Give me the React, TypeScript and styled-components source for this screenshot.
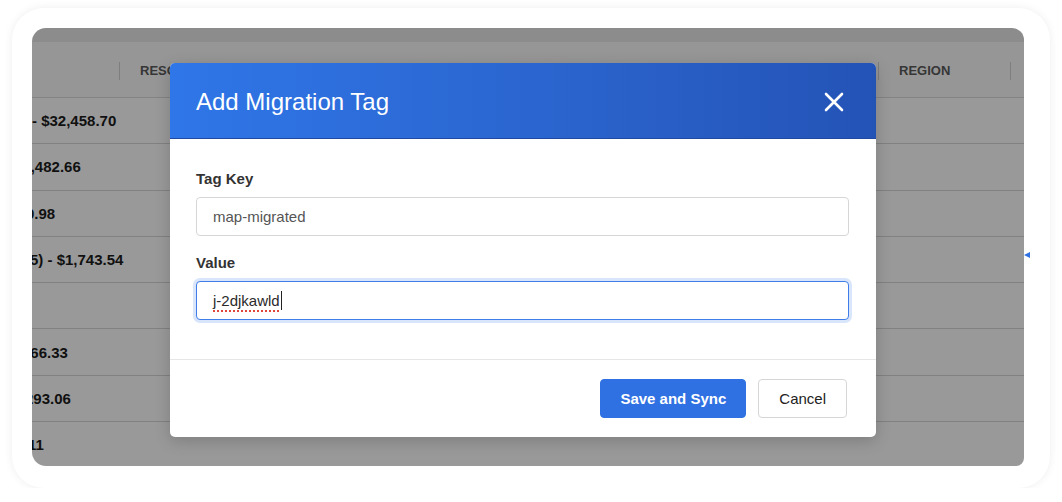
import React from "react";
import styled, { createGlobalStyle } from "styled-components";

const GlobalStyle = createGlobalStyle`
  body {
    margin: 0;
    background: #ffffff;
    font-family: "Liberation Sans", Arial, sans-serif;
  }
`;

const rows = [
  { text: "- $32,458.70", shift: 0 },
  { text: "$1,482.66", shift: -18 },
  { text: "0.98", shift: -6 },
  { text: "(5) - $1,743.54", shift: -7 },
  { text: "", shift: 0 },
  { text: "$66.33", shift: -10 },
  { text: "293.06", shift: -7 },
  { text: "11", shift: -4 },
];

function CloseIcon() {
  return (
    <svg width="20" height="20" viewBox="0 0 20 20" fill="none">
      <path d="M2 2L18 18M18 2L2 18" stroke="#fff" strokeWidth="2.6" strokeLinecap="round" />
    </svg>
  );
}

export default function App() {
  return (
    <>
      <GlobalStyle />
      <Page>
        <Card>
          <Screen>
            <TopBand />
            <HeaderRow>
              <HeaderCell />
              <HeaderCell $divider>RESOURCE</HeaderCell>
              <HeaderCell $divider>REGION</HeaderCell>
              <HeaderCell $divider />
            </HeaderRow>
            {rows.map((r, i) => (
              <Row key={i}>
                <AmountCell $shift={r.shift}>{r.text}</AmountCell>
                <Cell />
                <Cell />
                <Cell />
              </Row>
            ))}
            <Overlay />
            <Modal>
              <ModalHeader>
                <ModalTitle>Add Migration Tag</ModalTitle>
                <CloseButton aria-label="Close">
                  <CloseIcon />
                </CloseButton>
              </ModalHeader>
              <ModalBody>
                <Field>
                  <Label>Tag Key</Label>
                  <InputBox>
                    <InputText>map-migrated</InputText>
                  </InputBox>
                </Field>
                <Field>
                  <Label>Value</Label>
                  <InputBox $focused>
                    <InputText $misspelled>j-2djkawld</InputText>
                    <Caret />
                  </InputBox>
                </Field>
              </ModalBody>
              <ModalFooter>
                <Button $primary>Save and Sync</Button>
                <Button>Cancel</Button>
              </ModalFooter>
            </Modal>
          </Screen>
          <EdgeArrow />
        </Card>
      </Page>
    </>
  );
}

const Page = styled.div`
  padding: 8px 0 0 12px;
`;

const Card = styled.div`
  position: relative;
  box-sizing: border-box;
  width: 1038px;
  height: 480px;
  padding: 20px 26px 22px 20px;
  background: #ffffff;
  border-radius: 32px;
  box-shadow: 0 0 10px rgba(0, 0, 0, 0.07);
`;

const Screen = styled.div`
  position: relative;
  width: 100%;
  height: 100%;
  overflow: hidden;
  background: #ffffff;
  border-radius: 14px 12px 8px 14px;
`;

const TopBand = styled.div`
  height: 14px;
  background: #e9e9e9;
`;

const columns = "87px 759px 132px 1fr";

const HeaderRow = styled.div`
  display: grid;
  grid-template-columns: ${columns};
  align-items: center;
  height: 56px;
  box-sizing: border-box;
  border-bottom: 1px solid #dadada;
  background: #fafafa;
`;

const HeaderCell = styled.div<{ $divider?: boolean }>`
  height: 18px;
  line-height: 18px;
  margin-top: 2px;
  padding-left: 20px;
  border-left: ${(p) => (p.$divider ? "1px solid #d2d2d2" : "none")};
  font-size: 13px;
  font-weight: 700;
  color: #5a5a5a;
  white-space: nowrap;
  overflow: hidden;
`;

const Row = styled.div`
  display: grid;
  grid-template-columns: ${columns};
  align-items: center;
  height: 46.3px;
  box-sizing: border-box;
  border-bottom: 1px solid #d8d8d8;
`;

const Cell = styled.div``;

const AmountCell = styled.div<{ $shift: number }>`
  margin-left: ${(p) => p.$shift}px;
  font-size: 15px;
  font-weight: 700;
  color: #1c1c1c;
  white-space: nowrap;
`;

const Overlay = styled.div`
  position: absolute;
  inset: 0;
  background: rgba(0, 0, 0, 0.4);
`;

const Modal = styled.div`
  position: absolute;
  left: 138px;
  top: 35px;
  width: 706px;
  background: #ffffff;
  border-radius: 5px;
  overflow: hidden;
  box-shadow: 0 4px 16px rgba(0, 0, 0, 0.18);
`;

const ModalHeader = styled.div`
  display: flex;
  align-items: center;
  justify-content: space-between;
  height: 76px;
  box-sizing: border-box;
  padding: 3px 32px 0 26px;
  background: linear-gradient(90deg, #2f76e8 0%, #2b66d0 50%, #2453b6 100%);
  border-bottom: 1px solid #2149a0;
`;

const ModalTitle = styled.h2`
  margin: 0;
  font-size: 24px;
  font-weight: 400;
  color: #ffffff;
`;

const CloseButton = styled.button`
  display: flex;
  padding: 0;
  border: 0;
  background: none;
  cursor: pointer;
`;

const ModalBody = styled.div`
  display: flex;
  flex-direction: column;
  gap: 18px;
  padding: 31px 27px 39px 26px;
  border-bottom: 1px solid #e6e6e6;
`;

const Field = styled.div`
  display: flex;
  flex-direction: column;
  gap: 9px;
`;

const Label = styled.label`
  font-size: 15px;
  line-height: 18px;
  font-weight: 700;
  color: #333333;
`;

const InputBox = styled.div<{ $focused?: boolean }>`
  display: flex;
  align-items: center;
  height: 39px;
  box-sizing: border-box;
  padding: 0 16px;
  border-radius: 4px;
  border: 1px solid ${(p) => (p.$focused ? "#3f7ee8" : "#d6d6d6")};
  box-shadow: ${(p) => (p.$focused ? "0 0 0 3px rgba(64, 126, 232, 0.2)" : "none")};
  background: #ffffff;
`;

const InputText = styled.span<{ $misspelled?: boolean }>`
  font-size: 15px;
  color: ${(p) => (p.$misspelled ? "#2a2a2a" : "#555555")};
  text-decoration: ${(p) => (p.$misspelled ? "underline dotted #e0463c" : "none")};
  text-decoration-thickness: 2px;
  text-underline-offset: 4px;
`;

const Caret = styled.span`
  width: 1px;
  height: 19px;
  margin-left: 1px;
  background: #222222;
`;

const ModalFooter = styled.div`
  display: flex;
  justify-content: flex-end;
  gap: 12px;
  padding: 19px 29px 19px 0;
`;

const Button = styled.button<{ $primary?: boolean }>`
  height: 39px;
  padding: 0 ${(p) => (p.$primary ? "19px" : "20px")};
  border-radius: 4px;
  font-family: "Liberation Sans", Arial, sans-serif;
  font-size: 15px;
  font-weight: ${(p) => (p.$primary ? 700 : 400)};
  color: ${(p) => (p.$primary ? "#ffffff" : "#222222")};
  background: ${(p) => (p.$primary ? "#2f70e2" : "#ffffff")};
  border: 1px solid ${(p) => (p.$primary ? "#2f70e2" : "#d6d6d6")};
  cursor: pointer;
`;

const EdgeArrow = styled.div`
  position: absolute;
  left: 1012px;
  top: 244px;
  width: 0;
  height: 0;
  border-top: 3px solid transparent;
  border-bottom: 3px solid transparent;
  border-right: 6px solid #2f70e2;
`;
